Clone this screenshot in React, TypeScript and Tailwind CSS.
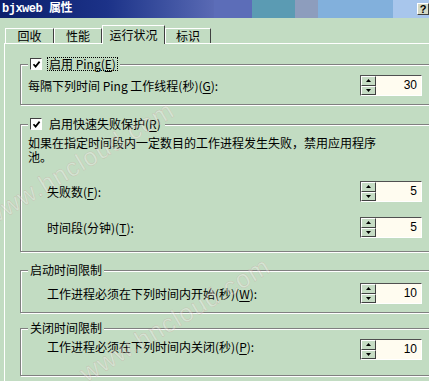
import React from "react";

const BG = "bg-[#c2dcc2]";

function Check() {
  return (
    <span className="inline-flex w-[12px] h-[12px] shrink-0 items-center justify-center bg-white border border-t-[#404040] border-l-[#404040] border-r-white border-b-white">
      <svg width="9" height="9" viewBox="0 0 9 9">
        <path d="M1.5 4.2 L3.6 6.6 L7.6 1.6" stroke="#000" strokeWidth="1.7" fill="none" />
      </svg>
    </span>
  );
}

function SpinBtn({ up }: { up?: boolean }) {
  return (
    <div className="flex-1 flex items-center justify-center bg-[#c6dcc4] border border-t-white border-l-white border-r-[#404040] border-b-[#404040]">
      <svg width="5" height="3" viewBox="0 0 5 3">
        <path d={up ? "M2.5 0 L5 3 L0 3 Z" : "M0 0 L5 0 L2.5 3 Z"} fill="#000" />
      </svg>
    </div>
  );
}

function Spin({ value, className = "" }: { value: string; className?: string }) {
  return (
    <div className={`flex w-[62px] h-[21px] shrink-0 border border-t-[#505050] border-l-[#505050] border-b-white border-r-white ${className}`}>
      <div className="flex flex-col w-[15px]">
        <SpinBtn up />
        <SpinBtn />
      </div>
      <div className="flex-1 bg-[#fffcf0] text-right pr-[4px] leading-[19px] text-[12px] font-['Liberation_Sans',sans-serif]">
        {value}
      </div>
    </div>
  );
}

function Group({
  legend,
  className = "",
  children,
}: {
  legend: React.ReactNode;
  className?: string;
  children?: React.ReactNode;
}) {
  return (
    <div
      className={`ml-[15px] w-[420px] border border-[#808080] shadow-[inset_1px_1px_0_#fff,1px_1px_0_#fff] ${className}`}
    >
      <div className="-mt-[8px] ml-[7px] flex h-[14px]">
        <div className={`${BG} px-[2px] flex items-center gap-[5px] h-[14px]`}>{legend}</div>
      </div>
      {children}
    </div>
  );
}

function U({ children }: { children: React.ReactNode }) {
  return <span className="underline underline-offset-2">{children}</span>;
}

function Row({
  label,
  value,
  pad,
  className = "",
}: {
  label: React.ReactNode;
  value: string;
  pad: string;
  className?: string;
}) {
  return (
    <div className={`flex items-center justify-between w-[401px] ${className}`}>
      <span className={`${pad} leading-[14px]`}>{label}</span>
      <Spin value={value} />
    </div>
  );
}

export default function App() {
  return (
    <div
      className={`relative w-[429px] h-[381px] overflow-hidden ${BG} text-black text-[12px] font-['Noto_Sans_CJK_SC',sans-serif]`}
    >
      {/* title bar */}
      <div className="flex h-[18px]">
        <div className="w-[214px] flex items-center pl-[2px] bg-gradient-to-r from-[#0a1f6c] via-[#1c3288] to-[#5a6ab4]">
          <span className="text-white font-bold text-[12px] font-['Liberation_Mono','Noto_Sans_CJK_SC',monospace] tracking-[-0.5px]">
            bjxweb 属性
          </span>
        </div>
        <div className="w-[38px] bg-[#5c6db8]" />
        <div className="w-[43px] bg-[#5b9bb3]" />
        <div className="w-[23px] bg-[#8d9dbd]" />
        <div className="w-[75px] bg-[#82b0dc]" />
        <div className="flex-1 bg-[#a8c6ec] flex items-start justify-end pt-[3px]">
          <div className="w-[12px] h-[12px] bg-[#d4d8c4] border border-t-white border-l-white border-r-[#404040] border-b-[#404040] flex items-center justify-center text-[11px] font-bold leading-none font-['Liberation_Sans',sans-serif]">
            ?
          </div>
        </div>
      </div>

      {/* tabs */}
      <div className="flex items-end h-[25px] pl-[5px]">
        <div className="w-[49px] h-[15px] flex items-center justify-center border-l border-t border-white border-r border-r-[#404040] leading-none">
          回收
        </div>
        <div className="w-[48px] h-[15px] flex items-center justify-center border-l border-t border-white border-r border-r-[#404040] leading-none">
          性能
        </div>
        <div className={`relative z-10 -mb-[1px] w-[63px] h-[19px] ${BG} flex items-center justify-center border-l border-t border-white border-r border-r-[#404040] leading-none`}>
          运行状况
        </div>
        <div className="w-[46px] h-[15px] flex items-center justify-center border-l border-t border-white border-r border-r-[#404040] leading-none">
          标识
        </div>
      </div>

      {/* panel */}
      <div className="ml-[4px] h-[338px] border-l border-t border-white">
        <Group
          className="mt-[20px] h-[41px]"
          legend={
            <>
              <Check />
              <span className="border border-dotted border-black px-[1px] leading-[12px]">
                启用 Ping(<U>E</U>)
              </span>
            </>
          }
        >
          <Row
            className="mt-[4px]"
            pad="pl-[7px]"
            value="30"
            label={
              <>
                每隔下列时间 Ping 工作线程(秒)(<U>G</U>):
              </>
            }
          />
        </Group>

        <Group
          className="mt-[19px] h-[128px]"
          legend={
            <>
              <Check />
              <span className="px-[2px]">
                启用快速失败保护(<U>R</U>)
              </span>
            </>
          }
        >
          <p className="mt-[5px] pl-[7px] leading-[14px]">
            如果在指定时间段内一定数目的工作进程发生失败，禁用应用程序
            <br />
            池。
          </p>
          <Row
            className="mt-[17px]"
            pad="pl-[26px]"
            value="5"
            label={
              <>
                失败数(<U>F</U>):
              </>
            }
          />
          <Row
            className="mt-[15px]"
            pad="pl-[26px]"
            value="5"
            label={
              <>
                时间段(分钟)(<U>T</U>):
              </>
            }
          />
        </Group>

        <Group className="mt-[18px] h-[43px]" legend={<span>启动时间限制</span>}>
          <Row
            className="mt-[6px]"
            pad="pl-[26px]"
            value="10"
            label={
              <>
                工作进程必须在下列时间内开始(秒)(<U>W</U>):
              </>
            }
          />
        </Group>

        <Group className="mt-[15px] h-[48px]" legend={<span>关闭时间限制</span>}>
          <div className="flex items-start justify-between w-[401px] mt-[4px]">
            <span className="pl-[26px] leading-[14px] mt-[1px]">
              工作进程必须在下列时间内关闭(秒)(<U>P</U>):
            </span>
            <Spin value="10" />
          </div>
        </Group>
      </div>

      {/* watermark */}
      <span className="pointer-events-none absolute left-[-4px] top-[198px] origin-bottom-left -rotate-[31deg] text-[25px] tracking-[1px] text-white/30 [-webkit-text-stroke:0.5px_rgba(190,120,120,0.3)] font-['Liberation_Sans',sans-serif] whitespace-nowrap">
        www.hncloud.com
      </span>
      <span className="pointer-events-none absolute left-[92px] top-[354px] origin-bottom-left -rotate-[31deg] text-[25px] tracking-[1px] text-white/30 [-webkit-text-stroke:0.5px_rgba(190,120,120,0.3)] font-['Liberation_Sans',sans-serif] whitespace-nowrap">
        www.hncloud.com
      </span>
    </div>
  );
}
